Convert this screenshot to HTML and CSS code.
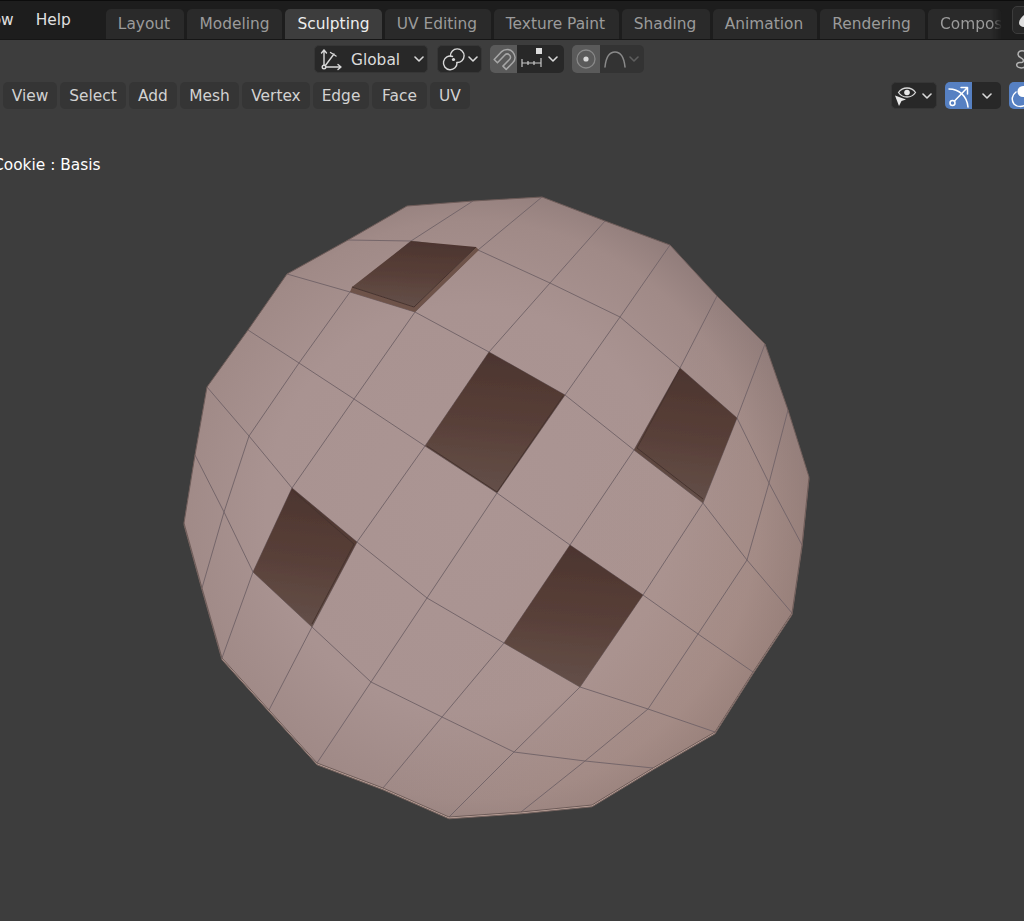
FILE: index.html
```
<!DOCTYPE html>
<html lang="en">
<head>
<meta charset="utf-8">
<title>Blender – Sculpting</title>
<link rel="stylesheet" href="styles.css">
</head>
<body>
<div class="app">
  <header class="topbar">
    <nav class="menus">
      <span class="menu menu-window">Window</span>
      <span class="menu">Help</span>
    </nav>
    <nav class="tabs">
      <span class="tab t-layout">Layout</span>
      <span class="tab t-modeling">Modeling</span>
      <span class="tab t-sculpting active">Sculpting</span>
      <span class="tab t-uv">UV Editing</span>
      <span class="tab t-texture">Texture Paint</span>
      <span class="tab t-shading">Shading</span>
      <span class="tab t-animation">Animation</span>
      <span class="tab t-rendering">Rendering</span>
      <span class="tab t-compos">Compositing</span>
    </nav>
    <div class="scene-btn">
      <svg class="scene-icon" viewBox="0 0 12 14"><path d="M8 0C5 3 1 6 1 10a5 4 0 0 0 5 4h6V0z"/></svg>
    </div>
  </header>

  <section class="toolheader">
    <div class="drop global">
      <svg class="ico" width="24" height="24" viewBox="0 0 24 24"><g class="s-light"><path d="M5 20V3M2.500 6 5 3l2.500 3M5 20h17M19 17.500 22 20l-3 2.500M6 19 15 7M11.500 5.500 17 9"/><circle cx="5" cy="20" r="1.800" class="dark-fill"/></g></svg>
      <span class="drop-label">Global</span>
      <svg class="chev" viewBox="0 0 10 6"><path d="M1 1l4 4 4-4"/></svg>
    </div>
    <div class="drop pivot">
      <svg class="ico" width="24" height="24" viewBox="0 0 24 24"><g class="s-light"><path d="M10.500 9.500A6.800 6.800 0 1 0 15 15.500"/><path d="M8.500 9A6.800 6.800 0 1 1 15 15.500"/></g><circle cx="11.500" cy="12.500" r="1.600" fill="#ddd"/></svg>
      <svg class="chev" viewBox="0 0 10 6"><path d="M1 1l4 4 4-4"/></svg>
    </div>
    <div class="group snap">
      <div class="on">
        <svg class="ico" width="24" height="24" viewBox="0 0 22 22"><path class="s-dim" d="M2 11.500 8.500 4.500C11.500 1.500 16.500 1.500 19 4.500s3 7 0 10L13 20.500l-3-3 6-6c1.300-1.300 1.300-3 0-4.200s-3-1.200-4.200 0L5 14.500z"/></svg>
      </div>
      <div class="rest">
        <svg class="ico" width="24" height="24" viewBox="0 0 24 24"><rect x="16" y="1" width="6" height="6" fill="#ddd"/><path class="s-thin" d="M2 16h19M2 12v8M8 14v4M14 14v4M21 11v9"/></svg>
        <svg class="chev" viewBox="0 0 10 6"><path d="M1 1l4 4 4-4"/></svg>
      </div>
    </div>
    <div class="group prop">
      <div class="on">
        <svg class="ico" width="22" height="22" viewBox="0 0 22 22"><circle cx="11" cy="11" r="9" fill="none" stroke="#888" stroke-width="1.300"/><circle cx="11" cy="11" r="2.600" fill="#d8d8d8"/></svg>
      </div>
      <div class="rest dim">
        <svg class="ico" width="24" height="24" viewBox="0 0 24 24"><path class="s-mid" d="M2 20C3 10 7 5 12 5s9 5 10 15"/></svg>
        <svg class="chev chev-dim" viewBox="0 0 10 6"><path d="M1 1l4 4 4-4"/></svg>
      </div>
    </div>
    <svg class="squiggle" viewBox="0 0 14 20"><path d="M9 2C5 1 3 3 3 5.500S7 9 8 10.500 8 14 5.500 13.500 1 15 2 17s5 2.500 8 1"/></svg>
  </section>

  <main class="viewport">
    <svg class="canvas" viewBox="0 77 1024 844" width="1024" height="844" aria-hidden="true">
      <defs>
        <radialGradient id="skin" gradientUnits="userSpaceOnUse" cx="470" cy="510" r="340">
          <stop offset="0" stop-color="#ab9593"/>
          <stop offset=".6" stop-color="#a99391"/>
          <stop offset=".85" stop-color="#a08a87"/>
          <stop offset="1" stop-color="#8e7a78"/>
        </radialGradient>
        <linearGradient id="warm" gradientUnits="userSpaceOnUse" x1="500" y1="580" x2="760" y2="760">
          <stop offset="0" stop-color="#ab9084" stop-opacity="0"/>
          <stop offset="1" stop-color="#b8927f" stop-opacity=".3"/>
        </linearGradient>
        <linearGradient id="choc" x1=".5" y1="0" x2=".4" y2="1">
          <stop offset="0" stop-color="#4c352f"/>
          <stop offset=".5" stop-color="#583f38"/>
          <stop offset="1" stop-color="#645049"/>
        </linearGradient>
        <filter id="soft"><feGaussianBlur stdDeviation=".4"/></filter>
      </defs>
      <g filter="url(#soft)">
        <polygon class="under" points="407,206 473,201 542,197 605,221 670,245 717,296 765,344 788,410 809,477 802,545 792,613 753,672 715,732 653,768 592,805 521,812 449,817 383,788 317,763 269,710 222,658 202,588 184,523 195,455 207,387 248,330 287,274 348,240" transform="translate(0 1.800)"/>
        <polygon class="ball" points="407,206 473,201 542,197 605,221 670,245 717,296 765,344 788,410 809,477 802,545 792,613 753,672 715,732 653,768 592,805 521,812 449,817 383,788 317,763 269,710 222,658 202,588 184,523 195,455 207,387 248,330 287,274 348,240"/>
        <polygon class="ball-warm" points="407,206 473,201 542,197 605,221 670,245 717,296 765,344 788,410 809,477 802,545 792,613 753,672 715,732 653,768 592,805 521,812 449,817 383,788 317,763 269,710 222,658 202,588 184,523 195,455 207,387 248,330 287,274 348,240"/>

        <g class="wire">
          <polyline points="348,240 411,241 478,250 550,283 620,317 680,368 737,418 769,483 802,545"/>
          <polyline points="287,274 350,292 415,312 489,352 565,395 634,450 703,503 747,560 792,613"/>
          <polyline points="248,330 299,363 354,399 425,446 497,493 570,545 643,595 698,634 753,672"/>
          <polyline points="207,387 249,436 292,488 357,542 427,598 504,643 580,687 648,709 715,732"/>
          <polyline points="195,455 224,512 253,572 312,627 371,682 442,717 514,752 585,761 653,768"/>
          <polyline points="473,201 411,241 350,292 299,363 249,436 224,512 202,588"/>
          <polyline points="542,197 478,250 415,312 354,399 292,488 253,572 222,658"/>
          <polyline points="605,221 550,283 489,352 425,446 357,542 312,627 269,710"/>
          <polyline points="670,245 620,317 565,395 497,493 427,598 371,682 317,763"/>
          <polyline points="717,296 680,368 634,450 570,545 504,643 442,717 383,788"/>
          <polyline points="765,344 737,418 703,503 643,595 580,687 514,752 449,817"/>
          <polyline points="788,410 769,483 747,560 698,634 648,709 585,761 521,812"/>
        </g>

        <polygon class="lip" points="350,292 415,312 479,250 476,247 414,307 352,287"/>
        <polygon class="cookie" points="411,241 476,247 414,307 352,287"/>
        <polyline class="lip-line" points="352,287 414,307 476,247"/>

        <polygon class="cookie" points="489,352 565,395 497,493 425,446"/>
        <polyline class="lip-line" points="427,446 497,492 563,396"/>

        <polygon class="cookie" points="680,368 737,418 703,503 634,450"/>
        <polyline class="lip-line" points="680,369 637,448 703,499"/>

        <polygon class="cookie" points="292,488 357,542 312,627 253,572"/>
        <polyline class="lip-line" points="292,490 354,544 312,624"/>

        <polygon class="cookie" points="570,545 643,595 580,687 504,643"/>

        <polygon class="edge" points="407,206 473,201 542,197 605,221 670,245 717,296 765,344 788,410 809,477 802,545 792,613 753,672 715,732 653,768 592,805 521,812 449,817 383,788 317,763 269,710 222,658 202,588 184,523 195,455 207,387 248,330 287,274 348,240"/>
      </g>
    </svg>

    <div class="viewbar">
      <nav class="viewmenu">
        <span class="vbtn v-view">View</span>
        <span class="vbtn v-select">Select</span>
        <span class="vbtn v-add">Add</span>
        <span class="vbtn v-mesh">Mesh</span>
        <span class="vbtn v-vertex">Vertex</span>
        <span class="vbtn v-edge">Edge</span>
        <span class="vbtn v-face">Face</span>
        <span class="vbtn v-uv">UV</span>
      </nav>
      <div class="overlays">
        <div class="drop vis">
          <svg class="ico" width="26" height="24" viewBox="0 0 26 24"><path d="M5.500 8.500C7.500 5.500 10.500 4 14 4s6.500 1.500 8.500 4.500c-2 3-5 4.500-8.500 4.500s-6.500-1.500-8.500-4.500z" fill="none" stroke="#d8d8d8" stroke-width="1.300"/><circle cx="14" cy="8.500" r="2.800" fill="#e8e8e8"/><path d="M2 11.500l11 4-4.500 1.500-2.500 5z" fill="#e8e8e8"/></svg>
          <svg class="chev" viewBox="0 0 10 6"><path d="M1 1l4 4 4-4"/></svg>
        </div>
        <div class="group gizmo">
          <div class="blue">
            <svg class="ico" width="24" height="24" viewBox="0 0 24 24"><g class="s-white"><path d="M2 5c10 0 18 7 19 18"/><path d="M7.500 17 20 4M14 3.500h6.500V10"/><circle cx="5.500" cy="19" r="2.500"/></g></svg>
          </div>
          <div class="rest">
            <svg class="chev" viewBox="0 0 10 6"><path d="M1 1l4 4 4-4"/></svg>
          </div>
        </div>
        <div class="blue xray">
          <svg class="ico" width="24" height="24" viewBox="0 0 24 24"><circle cx="13" cy="7.500" r="5.500" fill="#fff"/><path class="s-white" d="M6 8C2 11 1 16 4 20c3 3 8 3 12 1"/></svg>
        </div>
      </div>
    </div>
    <p class="objname">Cookie : Basis</p>
  </main>
</div>
</body>
</html>
```
FILE: styles.css
```
* { box-sizing: border-box; }
html, body { margin: 0; padding: 0; background: #3d3d3d; }
body { width: 1024px; height: 921px; overflow: hidden; font-family: "DejaVu Sans", sans-serif; font-size: 15.4px; }
.app { width: 1024px; height: 921px; display: flex; flex-direction: column; overflow: hidden; }

/* top bar */
.topbar { height: 40px; flex: none; display: flex; background: #1d1d1d; border-top: 1px solid #0c0c0c; border-bottom: 1px solid #161616; position: relative; overflow: hidden; }
.menus { display: flex; width: 106px; flex: none; color: #e0e0e0; height: 37px; align-items: flex-start; }
.menu { padding-top: 10px; line-height: 19px; white-space: nowrap; }
.menu-window { margin-left: -47px; margin-right: 22px; }
.tabs { display: flex; gap: 3px; padding-top: 8px; width: 896px; flex: none; overflow: hidden; }
.tab { height: 30px; background: #2a2a2a; color: #9b9b9b; border-radius: 5px 5px 0 0; text-align: center; line-height: 30px; white-space: nowrap; overflow: hidden; flex: none; }
.tab.active { background: #3d3d3d; color: #eee; }
.t-layout { width: 78px; padding-right: 2px; }
.t-modeling { width: 95px; }
.t-sculpting { width: 97px; }
.t-uv { width: 106px; padding-right: 2px; }
.t-texture { width: 125px; padding-right: 2px; }
.t-shading { width: 88px; padding-right: 2px; }
.t-animation { width: 104px; padding-right: 2px; }
.t-rendering { width: 105px; padding-right: 2px; }
.t-compos { width: 74px; text-align: left; padding-left: 12px; -webkit-mask-image: linear-gradient(90deg, #000 85%, transparent 100%); mask-image: linear-gradient(90deg, #000 85%, transparent 100%); }
.scene-btn { width: 40px; height: 28px; margin: 5px 0 0 10px; flex: none; background: #282828; border: 1px solid #3c3c3c; border-radius: 5px; }
.scene-icon { width: 12px; height: 14px; margin: 6px 0 0 5px; display: block; }
.scene-icon path { fill: #e0e0e0; }

/* tool header */
.toolheader { height: 37px; flex: none; display: flex; align-items: flex-start; padding: 5px 0 0 314px; gap: 8px; background: #3d3d3d; overflow: hidden; }
.drop { height: 28px; display: flex; align-items: center; background: #282828; border: 1px solid #363636; border-radius: 5px; color: #dcdcdc; flex: none; }
.global { width: 114px; padding-left: 4px; margin-right: 1px; }
.drop-label { margin-left: 8px; padding-top: 2px; }
.global .chev { margin-left: 14px; }
.pivot { width: 45px; padding-left: 4px; }
.group { height: 28px; display: flex; border-radius: 5px; overflow: hidden; flex: none; }
.group .on { width: 27px; background: #5a5a5a; display: flex; align-items: center; justify-content: center; }
.group .rest { background: #282828; display: flex; align-items: center; flex: 1; }
.snap { width: 74px; }
.snap .rest { padding-left: 3px; }
.snap .chev { margin-left: 4px; }
.prop { width: 72px; }
.prop .on { width: 28px; }
.prop .rest { background: #333; padding-left: 3px; }
.ico { display: block; flex: none; }
.chev { width: 10px; height: 6px; flex: none; margin-left: 2px; }
.chev path { fill: none; stroke: #d8d8d8; stroke-width: 1.6; stroke-linecap: round; stroke-linejoin: round; }
.chev-dim path { stroke: #5e5e5e; }
.s-light * , .s-light { fill: none; stroke: #d8d8d8; stroke-width: 1.4; stroke-linecap: round; stroke-linejoin: round; }
.dark-fill { fill: #282828; }
.s-dim { fill: none; stroke: #a6a6a6; stroke-width: 1.4; stroke-linejoin: round; }
.s-thin { fill: none; stroke: #c8c8c8; stroke-width: 1.2; }
.s-mid { fill: none; stroke: #8a8a8a; stroke-width: 1.5; stroke-linecap: round; }
.s-white * , .s-white { fill: none; stroke: #fff; stroke-width: 1.5; stroke-linecap: round; stroke-linejoin: round; }
.squiggle { width: 14px; height: 20px; margin-left: auto; margin-right: -5px; flex: none; margin-top: 4px; }
.squiggle path { fill: none; stroke: #b4b4b4; stroke-width: 1.5; stroke-linecap: round; }

/* viewport */
.viewport { position: relative; flex: 1; background: #3d3d3d; }
.canvas { position: absolute; left: 0; top: 0; display: block; }
.viewbar { position: relative; display: flex; justify-content: space-between; padding-top: 5px; height: 33px; }
.viewmenu { display: flex; gap: 3px; margin-left: 3px; }
.vbtn { height: 27px; background: #353535; color: #d2d2d2; border-radius: 5px; line-height: 29px; text-align: center; flex: none; }
.v-view { width: 54px; }
.v-select { width: 66px; }
.v-add { width: 48px; }
.v-mesh { width: 59px; }
.v-vertex { width: 68px; }
.v-edge { width: 56px; }
.v-face { width: 55px; }
.v-uv { width: 40px; }
.overlays { display: flex; align-items: flex-start; gap: 8px; width: 133px; flex: none; overflow: hidden; }
.vis { width: 46px; height: 27px; padding-left: 1px; background: #282828; }
.vis .chev { margin-left: 3px; }
.gizmo { width: 56px; height: 27px; }
.blue { background: #5680c2; display: flex; align-items: center; justify-content: center; }
.gizmo .blue { width: 27px; }
.gizmo .rest { justify-content: center; }
.gizmo .chev { margin: 0; }
.xray { width: 30px; height: 27px; border-radius: 5px 0 0 5px; flex: none; justify-content: flex-start; padding-left: 1px; }
.objname { position: relative; margin: 46px 0 0 -7px; color: #fff; line-height: 19px; white-space: nowrap; }

/* model */
.under { fill: #c0a69d; stroke: #75635f; stroke-width: 1; stroke-linejoin: round; }
.ball { fill: url(#skin); }
.ball-warm { fill: url(#warm); }
.wire { fill: none; stroke: #75666a; stroke-width: 1; }
.cookie { fill: url(#choc); }
.lip { fill: #6e5249; }
.lip-line { fill: none; stroke: #46332e; stroke-width: 1; }
.edge { fill: none; stroke: #6e5c59; stroke-width: 1; stroke-linejoin: round; }
```
